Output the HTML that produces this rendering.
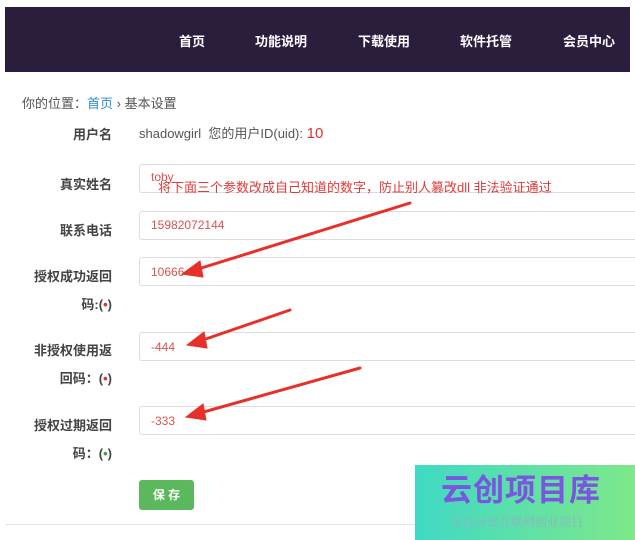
<!DOCTYPE html>
<html><head><meta charset="utf-8"><style>
body{margin:0;width:635px;height:540px;background:#fff;position:relative;overflow:hidden;font-family:"Liberation Sans","Noto Sans CJK SC",sans-serif;}
.nav{position:absolute;left:5px;top:7px;width:625px;height:65px;background:#2b1e3d;}
.nav span{position:absolute;top:24px;color:#fff;font-size:13px;font-weight:bold;}
.a{position:absolute;font-size:13px;color:#555;}
.l{position:absolute;font-size:13px;color:#444;font-weight:bold;text-align:right;width:100px;left:12px;}
.in{position:absolute;left:139px;width:500px;height:29px;border:1px solid #ddd;border-radius:3px;box-sizing:border-box;}
.v{position:absolute;left:151px;font-size:12px;color:#d9534f;}
</style></head><body>
<div class="nav">
<span style="left:174px">首页</span><span style="left:250px">功能说明</span><span style="left:353px">下载使用</span><span style="left:455px">软件托管</span><span style="left:558px">会员中心</span>
</div>
<div class="a" style="left:22px;top:93px">你的位置：<span style="color:#2a8ad6">首页</span> › 基本设置</div>
<div class="l" style="top:124px">用户名</div>
<div class="a" style="left:139px;top:123px;font-size:13px">shadowgirl &nbsp;您的用户ID(uid): <span style="color:#e03030;font-size:15px">10</span></div>
<div class="in" style="top:164px"></div><div class="l" style="top:174px">真实姓名</div><div class="v" style="top:170px">toby</div>
<div class="in" style="top:211px"></div><div class="l" style="top:220px">联系电话</div><div class="v" style="top:218px">15982072144</div>
<div class="in" style="top:257px"></div><div class="l" style="top:266px">授权成功返回</div><div class="l" style="top:294px">码:(<span style="color:#e03030">•</span>)</div><div class="v" style="top:265px">10666</div>
<div class="in" style="top:332px"></div><div class="l" style="top:340px">非授权使用返</div><div class="l" style="top:368px">回码：(<span style="color:#e03030">•</span>)</div><div class="v" style="top:340px">-444</div>
<div class="in" style="top:406px"></div><div class="l" style="top:415px">授权过期返回</div><div class="l" style="top:443px">码：(<span style="color:#3a3">•</span>)</div><div class="v" style="top:414px">-333</div>
<div class="a" style="left:158px;top:177px;color:#e03a3a;font-size:13px">将下面三个参数改成自己知道的数字，防止别人篡改dll 非法验证通过</div>
<svg style="position:absolute;left:0;top:0" width="635" height="540">
<g fill="#e8302a" stroke="#e8302a" stroke-linecap="round">
<line x1="410" y1="203" x2="195" y2="270" stroke-width="3"/><polygon points="182,274 200,261 203,277"/>
<line x1="290" y1="310" x2="200" y2="341" stroke-width="3"/><polygon points="187,345 204,332 207,348"/>
<line x1="360" y1="368" x2="200" y2="413" stroke-width="3"/><polygon points="186,417 203,404 206,420"/>
</g></svg>
<div style="position:absolute;left:139px;top:480px;width:55px;height:30px;background:#5cb85c;border-radius:3px;color:#fff;font-size:12px;font-weight:bold;text-align:center;line-height:30px">保 存</div>
<div style="position:absolute;left:5px;top:524px;width:410px;height:1px;background:#e5e5e5"></div>
<div style="position:absolute;left:415px;top:465px;width:220px;height:75px;background:linear-gradient(90deg,#3fd9c4,#7ee88a)">
<div style="position:absolute;left:26px;top:8px;font-size:31px;line-height:36px;font-weight:bold;color:#7a55e0;letter-spacing:1px">云创项目库</div>
<div style="position:absolute;left:36px;top:50px;font-size:12px;line-height:14px;color:#8fb0c8;font-family:'Noto Serif CJK SC',serif">专注分享互联网创业项目</div>
</div>
</body></html>
